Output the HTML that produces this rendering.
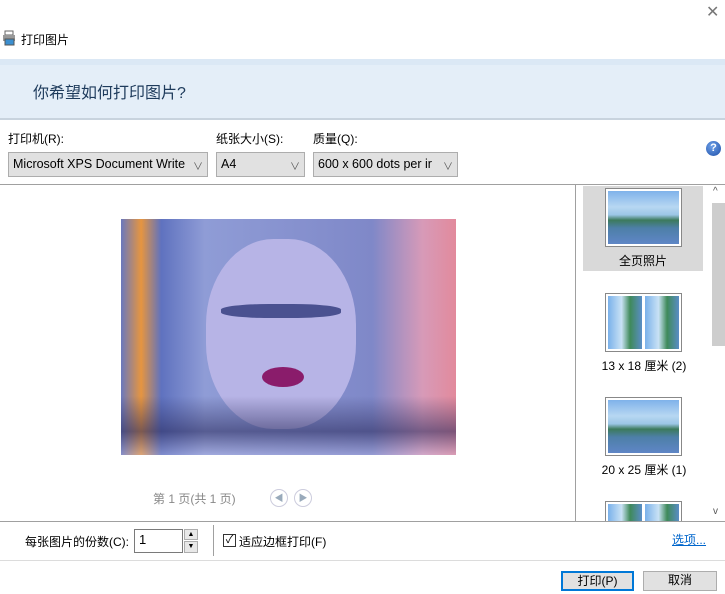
<!DOCTYPE html>
<html><head><meta charset="utf-8"><style>
*{margin:0;padding:0;box-sizing:border-box}
html,body{width:725px;height:594px;overflow:hidden}
body{background:#fff;position:relative;font-family:"Liberation Sans","Noto Sans CJK SC",sans-serif;font-size:12px;color:#000}
.a{position:absolute}
.sel{position:absolute;top:152px;height:25px;background:#e1e1e1;border:1px solid #adadad;font-size:12.5px;padding:4px 4px;white-space:nowrap;overflow:hidden}
.sel i{position:absolute;right:4px;top:5px;font-style:normal;color:#555;font-size:10px}
.th{position:absolute;left:605px;width:77px;height:59px;border:1px solid #888;background:#fff;padding:2px;overflow:hidden}
.land{width:100%;height:100%;background:linear-gradient(180deg,#7fb2ea 0%,#b7d7f2 30%,#9cc6e6 45%,#3c7a5c 55%,#4d7fa8 70%,#5f86c6 100%)}
.port{float:left;width:34px;height:100%;margin-right:3px;background:linear-gradient(90deg,#7ab1ea 0%,#c9e2f5 40%,#3f8a5a 65%,#5a8dc6 100%)}
.lbl{position:absolute;left:583px;width:120px;text-align:center;font-size:12px}
.btn{position:absolute;top:571px;height:20px;background:#e1e1e1;border:1px solid #adadad;text-align:center;font-size:12px;line-height:17px}
</style></head><body>
<div class="a" style="left:706px;top:2px;font-size:16px;color:#777">✕</div>
<svg class="a" style="left:2px;top:30px" width="14" height="16"><rect x="3" y="1" width="8" height="4" fill="#fff" stroke="#666"/><rect x="1" y="5" width="12" height="6" fill="#999"/><rect x="3" y="9" width="9" height="6" fill="#3b8fd0" stroke="#555"/></svg>
<div class="a" style="left:21px;top:31px;font-size:12px">打印图片</div>
<div class="a" style="left:0;top:59px;width:725px;height:61px;background:#e4eef8;border-top:6px solid #dbe8f5;border-bottom:2px solid #c8d3de"></div>
<div class="a" style="left:33px;top:79px;font-size:16px;color:#1e3b5c">你希望如何打印图片?</div>
<div class="a" style="left:8px;top:130px">打印机(R):</div>
<div class="a" style="left:216px;top:130px">纸张大小(S):</div>
<div class="a" style="left:313px;top:130px">质量(Q):</div>
<div class="sel" style="left:8px;width:200px">Microsoft XPS Document Write<i>∨</i></div>
<div class="sel" style="left:216px;width:89px">A4<i>∨</i></div>
<div class="sel" style="left:313px;width:145px">600 x 600 dots per ir<i>∨</i></div>
<div class="a" style="left:706px;top:141px;width:15px;height:15px;border-radius:50%;background:radial-gradient(circle at 40% 35%,#6ea0e8,#1d4fa8);color:#fff;font-size:11px;font-weight:bold;text-align:center;line-height:15px">?</div>
<div class="a" style="left:0;top:184px;width:725px;height:1px;background:#a0a0a0"></div>
<div class="a" style="left:575px;top:184px;width:1px;height:337px;background:#a0a0a0"></div>
<div class="a" style="left:121px;top:219px;width:335px;height:236px;overflow:hidden;background:linear-gradient(90deg,#6a78bd 0%,#e69540 6%,#5f72bf 12%,#8f9cd6 25%,#7f88c8 75%,#d79ab8 90%,#e28a9c 100%);">
<div class="a" style="left:85px;top:20px;width:150px;height:190px;border-radius:45%;background:#b7b4e6"></div>
<div class="a" style="left:100px;top:85px;width:120px;height:14px;background:#4a5190;border-radius:40%"></div>
<div class="a" style="left:141px;top:148px;width:42px;height:20px;border-radius:50%;background:#8a1c6b"></div>
<div class="a" style="left:0;top:0;width:335px;height:236px;background:linear-gradient(180deg,transparent 75%,rgba(40,40,90,.55) 90%,rgba(200,200,240,.3) 100%)"></div>
</div>
<div class="a" style="left:153px;top:490px;color:#888">第 1 页(共 1 页)</div>
<div class="a" style="left:270px;top:489px;width:18px;height:18px;border-radius:50%;border:1px solid #ccd;color:#9ab;font-size:9px;text-align:center;line-height:16px">◀</div>
<div class="a" style="left:294px;top:489px;width:18px;height:18px;border-radius:50%;border:1px solid #ccd;color:#9ab;font-size:9px;text-align:center;line-height:16px">▶</div>
<div class="a" style="left:583px;top:186px;width:120px;height:85px;background:#d9d9d9"></div>
<div class="th" style="top:188px"><div class="land"></div></div>
<div class="lbl" style="top:252px">全页照片</div>
<div class="th" style="top:293px"><div class="port"></div><div class="port" style="margin:0"></div></div>
<div class="lbl" style="top:357px;left:584px">13 x 18 厘米 (2)</div>
<div class="th" style="top:397px"><div class="land"></div></div>
<div class="lbl" style="top:461px;left:584px">20 x 25 厘米 (1)</div>
<div class="th" style="top:501px;height:30px"><div class="port" style="height:40px"></div><div class="port" style="margin:0;height:40px"></div></div>
<div class="a" style="left:712px;top:203px;width:13px;height:143px;background:#cdcdcd"></div>
<div class="a" style="left:713px;top:186px;font-size:10px;color:#555">^</div>
<div class="a" style="left:713px;top:506px;font-size:10px;color:#555">v</div>
<div class="a" style="left:0;top:521px;width:725px;height:73px;background:#fff;border-top:1px solid #a0a0a0"></div>
<div class="a" style="left:25px;top:533px">每张图片的份数(C):</div>
<div class="a" style="left:134px;top:529px;width:49px;height:24px;border:1px solid #7a7a7a;padding:2px 4px;font-size:13px">1</div>
<div class="a" style="left:184px;top:529px;width:14px;height:11px;border:1px solid #adadad;background:#e8e8e8;font-size:7px;text-align:center;line-height:9px">▲</div>
<div class="a" style="left:184px;top:541px;width:14px;height:12px;border:1px solid #adadad;background:#e8e8e8;font-size:7px;text-align:center;line-height:10px">▼</div>
<div class="a" style="left:213px;top:525px;width:1px;height:31px;background:#a0a0a0"></div>
<div class="a" style="left:223px;top:534px;width:13px;height:13px;border:1px solid #333;font-size:11px;line-height:11px;text-align:center">✓</div>
<div class="a" style="left:239px;top:533px">适应边框打印(F)</div>
<div class="a" style="left:672px;top:531px;color:#0066cc;text-decoration:underline">选项...</div>
<div class="a" style="left:0;top:560px;width:725px;height:1px;background:#dcdcdc"></div>
<div class="btn" style="left:561px;width:73px;border:2px solid #0078d7">打印(P)</div>
<div class="btn" style="left:643px;width:74px">取消</div>
</body></html>
